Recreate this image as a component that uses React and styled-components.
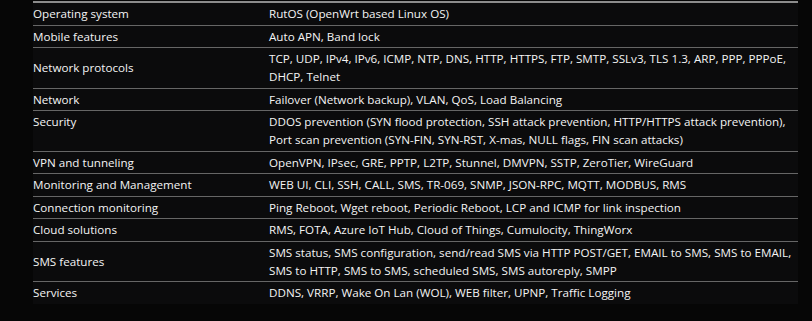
import React from "react";
import styled, { createGlobalStyle } from "styled-components";

const Global = createGlobalStyle`
  html, body { margin: 0; padding: 0; background: #060606; }
  body { font-family: "Open Sans", "Liberation Sans", sans-serif; }
`;

const Page = styled.div`
  padding: 1px 0 0 33px;
  width: 812px;
  height: 321px;
  box-sizing: border-box;
  overflow: hidden;
`;

const Table = styled.table`
  width: 765px;
  border-collapse: collapse;
  border-top: 2px solid #8c8c8c;
  background: #0b0b0c;
  font-size: 11.65px;
  line-height: 18px;
  color: #f4f4f4;
`;

const Row = styled.tr`
  border-bottom: 1px solid #666;
  &:last-child { border-bottom: none; }
`;

const Label = styled.td`
  width: 236px;
  padding: 2px 0 1.5px 0;
  vertical-align: ${(p) => (p.$top ? "top" : "middle")};
`;

const Value = styled.td`
  padding: 2px 6px 1.5px 0;
  vertical-align: top;
`;

const rows = [
  ["Operating system", "RutOS (OpenWrt based Linux OS)"],
  ["Mobile features", "Auto APN, Band lock"],
  ["Network protocols", "TCP, UDP, IPv4, IPv6, ICMP, NTP, DNS, HTTP, HTTPS, FTP, SMTP, SSLv3, TLS 1.3, ARP, PPP, PPPoE, DHCP, Telnet"],
  ["Network", "Failover (Network backup), VLAN, QoS, Load Balancing"],
  ["Security", "DDOS prevention (SYN flood protection, SSH attack prevention, HTTP/HTTPS attack prevention), Port scan prevention (SYN-FIN, SYN-RST, X-mas, NULL flags, FIN scan attacks)", true],
  ["VPN and tunneling", "OpenVPN, IPsec, GRE, PPTP, L2TP, Stunnel, DMVPN, SSTP, ZeroTier, WireGuard"],
  ["Monitoring and Management", "WEB UI, CLI, SSH, CALL, SMS, TR-069, SNMP, JSON-RPC, MQTT, MODBUS, RMS"],
  ["Connection monitoring", "Ping Reboot, Wget reboot, Periodic Reboot, LCP and ICMP for link inspection"],
  ["Cloud solutions", "RMS, FOTA, Azure IoT Hub, Cloud of Things, Cumulocity, ThingWorx"],
  ["SMS features", "SMS status, SMS configuration, send/read SMS via HTTP POST/GET, EMAIL to SMS, SMS to EMAIL, SMS to HTTP, SMS to SMS, scheduled SMS, SMS autoreply, SMPP"],
  ["Services", "DDNS, VRRP, Wake On Lan (WOL), WEB filter, UPNP, Traffic Logging"],
];

export default function App() {
  return (
    <>
      <Global />
      <Page>
        <Table>
          <tbody>
            {rows.map(([k, v, top]) => (
              <Row key={k}>
                <Label $top={top}>{k}</Label>
                <Value>{v}</Value>
              </Row>
            ))}
          </tbody>
        </Table>
      </Page>
    </>
  );
}
